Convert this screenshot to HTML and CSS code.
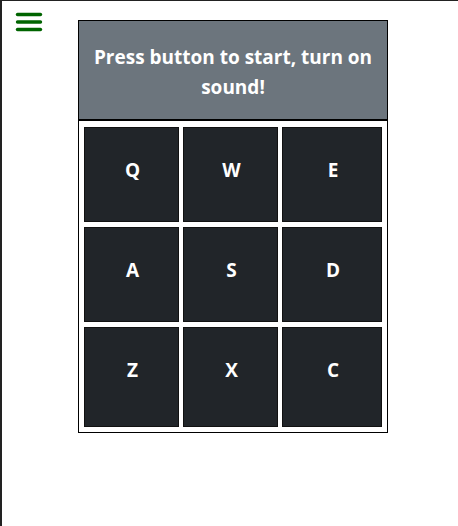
FILE: index.html
```html
<!DOCTYPE html>
<html>
<head>
<meta charset="utf-8">
<link rel="stylesheet" href="styles.css">
</head>
<body>
<div class="frame">
  <button class="menu" aria-label="menu">
    <svg width="28" height="22" viewBox="0 0 28 22">
      <line x1="2.5" y1="3.5" x2="25.5" y2="3.5" stroke="#006400" stroke-width="3.4" stroke-linecap="round"/>
      <line x1="2.5" y1="11" x2="25.5" y2="11" stroke="#006400" stroke-width="3.4" stroke-linecap="round"/>
      <line x1="2.5" y1="18.5" x2="25.5" y2="18.5" stroke="#006400" stroke-width="3.4" stroke-linecap="round"/>
    </svg>
  </button>
  <div class="drum">
    <div class="display">Press button to start, turn on sound!</div>
    <div class="pads">
      <div class="pad">Q</div>
      <div class="pad">W</div>
      <div class="pad">E</div>
      <div class="pad">A</div>
      <div class="pad">S</div>
      <div class="pad">D</div>
      <div class="pad">Z</div>
      <div class="pad">X</div>
      <div class="pad">C</div>
    </div>
  </div>
</div>
</body>
</html>
```
FILE: styles.css
```css
html, body {
  margin: 0;
  padding: 0;
  background: #fff;
}
.frame {
  width: 458px;
  height: 526px;
  box-sizing: border-box;
  border-top: 1px solid #222;
  border-left: 2px solid #222;
  display: flex;
  align-items: flex-start;
  font-family: "Open Sans", "Noto Sans", sans-serif;
}
.menu {
  margin: 10px 0 0 13px;
  padding: 0;
  border: none;
  background: none;
  width: 28px;
  height: 22px;
  display: block;
}
.menu svg { display: block; }
.drum {
  margin: 19px 0 0 35px;
  width: 310px;
  box-sizing: border-box;
  border: 1px solid #000;
}
.display {
  background: #6c757d;
  color: #fff;
  font-weight: 700;
  font-size: 19px;
  line-height: 30px;
  text-align: center;
  padding: 21px 10px 17px;
  border-bottom: 2px solid #000;
}
.pads {
  display: grid;
  grid-template-columns: 95px 95px 100px;
  grid-template-rows: 95px 95px 100px;
  column-gap: 4px;
  row-gap: 5px;
  padding: 6px 5px 5px;
}
.pad {
  background: #212529;
  border: 1px solid #111;
  color: #fff;
  font-weight: 700;
  font-size: 19px;
  line-height: 26px;
  text-align: center;
  padding: 29px 0 0 2px;
  box-sizing: border-box;
}
```
